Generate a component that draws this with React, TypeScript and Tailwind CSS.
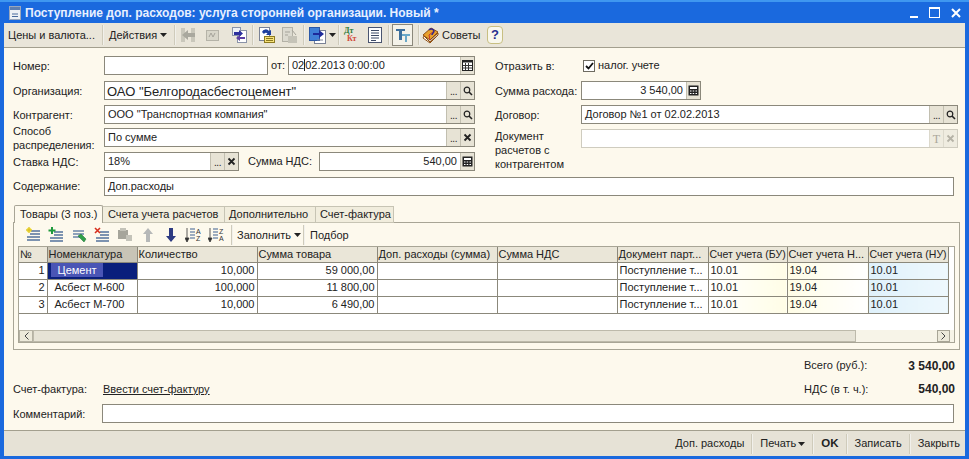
import type { ReactNode } from "react";

const font = "font-['Liberation_Sans',sans-serif]";

function Sep({ className = "" }: { className?: string }) {
  return <div className={`w-[2px] h-[20px] bg-[#cfcbbb] border-r border-white/70 shrink-0 ${className}`} />;
}

function Caret({ color = "#222" }: { color?: string }) {
  return (
    <svg width="7" height="4" viewBox="0 0 7 4" className="shrink-0">
      <path d="M0 0h7L3.5 4z" fill={color} />
    </svg>
  );
}

function Ico({ w = 16, h = 16, className = "", children }: { w?: number; h?: number; className?: string; children: ReactNode }) {
  return (
    <svg width={w} height={h} viewBox={`0 0 ${w} ${h}`} className={`shrink-0 ${className}`}>
      {children}
    </svg>
  );
}

const IconBackGrey = () => (
  <Ico>
    <rect x="1" y="1" width="4" height="14" fill="#c9c7bb" />
    <rect x="11" y="1" width="4" height="14" fill="#c9c7bb" />
    <path d="M2 8l6-5v3h7v4H8v3z" fill="#a9a89e" />
  </Ico>
);
const IconWaveGrey = () => (
  <Ico>
    <rect x="1.5" y="3.5" width="12" height="10" fill="#d8d6ca" stroke="#b5b3a8" />
    <path d="M4 10l2-4 2 4 2-4" fill="none" stroke="#a5a39a" />
  </Ico>
);
const IconDocArrows = () => (
  <Ico>
    <rect x="6.5" y="3.5" width="9" height="12" fill="#fff" stroke="#8a93a8" />
    <rect x="1.5" y="0.5" width="8" height="8" fill="#eef1f7" stroke="#8a93a8" />
    <path d="M3 5h5V3l4 3.5L8 10V8H3z" fill="#2c2f9e" />
    <path d="M14 10H9V8l-4 3 4 3v-2h5z" fill="#5b3fa5" />
  </Ico>
);
const IconDocYellow = () => (
  <Ico w={18} h={18}>
    <rect x="2.5" y="1.5" width="10" height="13" fill="#fff" stroke="#7a8296" />
    <path d="M5 6a4 4 0 0 1 7-1l2-1v5h-5l1.5-1.5A2 2 0 0 0 7 8z" fill="#1e3f9e" />
    <rect x="7.5" y="10.5" width="10" height="6" fill="#f7e27a" stroke="#8d7a20" />
    <path d="M9 12.5h7M9 14.5h7" stroke="#8d7a20" />
  </Ico>
);
const IconDocGrey = () => (
  <Ico w={17} h={17}>
    <rect x="1.5" y="0.5" width="10" height="14" fill="#dcdad0" stroke="#b3b1a6" />
    <rect x="7" y="9" width="9" height="7" fill="#c5c3b8" />
    <path d="M11 3l4 5M4 5h5M4 8h3" stroke="#a5a39a" fill="none" />
  </Ico>
);
const IconDocBlue = () => (
  <Ico w={17} h={17}>
    <rect x="5.5" y="3.5" width="11" height="13" fill="#fff" stroke="#7a8296" />
    <rect x="0.5" y="0.5" width="10" height="13" fill="#3f7fd6" stroke="#2b58a8" />
    <path d="M4 6h6V3l5 4-5 4V8H4z" fill="#1d2a9a" />
    <path d="M8 13h6" stroke="#7a8296" />
  </Ico>
);
const IconList = () => (
  <Ico>
    <rect x="1.5" y="0.5" width="13" height="15" fill="#fff" stroke="#4a5570" />
    <path d="M4 3.500h8M4 6h8M4 8.500h8M4 11h8M4 13.500h5" stroke="#3d4a66" />
  </Ico>
);
const IconFilter = () => (
  <Ico>
    <path d="M1 2h9v2H7v9H4V4H1z" fill="#3d6f9c" />
    <path d="M7 7h8v2h-3v6H10V9H7z" fill="#6aa8c8" />
  </Ico>
);
const IconBook = () => (
  <Ico w={18} h={18}>
    <path d="M1 9l8-7 7 4-8 8z" fill="#e9a12c" stroke="#8f4e10" />
    <path d="M2 10l6 6 8-9v2l-8 8-7-5z" fill="#fff" stroke="#8f4e10" />
    <path d="M8 14l-1-5 5-4" fill="none" stroke="#c4352a" />
    <path d="M7 4a3 3 0 0 1 5 1c0 2-2 2-2 4" fill="none" stroke="#33298c" strokeWidth="1.5" />
  </Ico>
);
const IconNewRow = () => (
  <Ico>
    <path d="M5 4h10M5 7h10M2 10h13M2 13h13" stroke="#7d93b0" strokeWidth="2" />
    <circle cx="4" cy="3" r="2.5" fill="#f5e54a" />
    <path d="M4 0v6M1 3h6" stroke="#d6b81f" />
  </Ico>
);
const IconAddRow = () => (
  <Ico>
    <path d="M6 5h9M6 8h9M2 11h13M2 14h13" stroke="#7d93b0" strokeWidth="2" />
    <path d="M4 0v7M0.5 3.500h7" stroke="#1f9a3c" strokeWidth="2" />
  </Ico>
);
const IconEditRow = () => (
  <Ico>
    <path d="M2 4h11M2 7h11M2 10h7" stroke="#8fa2bb" strokeWidth="2" />
    <path d="M7 9l3-2 5 5-2 3z" fill="#2fa04a" stroke="#1a6b30" strokeWidth="0.5" />
  </Ico>
);
const IconDelRow = () => (
  <Ico>
    <path d="M6 5h9M6 8h9M2 11h13M2 14h13" stroke="#7d93b0" strokeWidth="2" />
    <path d="M1 1l5 5M6 1L1 6" stroke="#d8301f" strokeWidth="1.6" />
  </Ico>
);
const IconOkGrey = () => (
  <Ico>
    <rect x="1" y="3" width="10" height="9" fill="#a6a59b" />
    <rect x="3" y="1" width="6" height="3" fill="#c4c3b9" />
    <rect x="9" y="8" width="6" height="6" fill="#c4c3b9" />
  </Ico>
);
const ArrowUp = () => (
  <Ico w={12}>
    <path d="M6 1l5 6H8v8H4V7H1z" fill="#b6b8b8" />
  </Ico>
);
const ArrowDown = () => (
  <Ico w={12}>
    <path d="M4 1h4v8h3l-5 6-5-6h3z" fill="#2d3a82" />
  </Ico>
);
const SortIcon = ({ top, bot }: { top: string; bot: string }) => (
  <Ico>
    <path d="M5 2h5M5 5h5M5 8h5M5 11h5" stroke="#7d93b0" strokeWidth="1.6" />
    <path d="M2 1v12M0 11l2 4 2-4z" stroke="#333" fill="#333" strokeWidth="0.8" />
    <text x="11" y="7" fontSize="7" fill="#333" fontFamily="Liberation Sans">{top}</text>
    <text x="11" y="14" fontSize="7" fill="#333" fontFamily="Liberation Sans">{bot}</text>
  </Ico>
);

function BtnIcon({ kind, dim }: { kind: string; dim?: boolean }) {
  const c = dim ? "#b5b2a6" : "#222";
  if (kind === "dots") return <span className="text-[10px] leading-[10px] pt-[2px] text-[#222] tracking-[-0.5px]">...</span>;
  if (kind === "search")
    return (
      <Ico w={10} h={10}>
        <circle cx="4" cy="4" r="2.8" fill="none" stroke={c} strokeWidth="1.2" />
        <path d="M6 6l3 3" stroke={c} strokeWidth="1.6" />
      </Ico>
    );
  if (kind === "x")
    return (
      <Ico w={9} h={9}>
        <path d="M1.5 1.5l6 6M7.5 1.5l-6 6" stroke={c} strokeWidth="1.8" />
      </Ico>
    );
  if (kind === "T") return <span className="font-['Liberation_Serif',serif] text-[12px] leading-none text-[#aaa79a]">T</span>;
  if (kind === "cal")
    return (
      <Ico w={11} h={11}>
        <rect x="0.5" y="0.5" width="10" height="10" fill="#fff" stroke="#222" />
        <rect x="0.5" y="0.5" width="10" height="2" fill="#222" />
        <path d="M3.5 3v7M6.5 3v7M1 5.5h9M1 8h9" stroke="#333" />
      </Ico>
    );
  return (
    <Ico w={11} h={11}>
      <rect x="0.5" y="0.5" width="10" height="10" fill="#222" />
      <rect x="2" y="2" width="7" height="2" fill="#fff" />
      <path d="M2 6h1.5M4.7 6h1.5M7.5 6H9M2 8.5h1.5M4.7 8.5h1.5M7.5 8.5H9" stroke="#fff" />
    </Ico>
  );
}

function Field({ value, buttons = [], right, className = "w-full", dim, size = "" }: { value?: ReactNode; buttons?: string[]; right?: boolean; className?: string; dim?: boolean; size?: string }) {
  return (
    <div className={`flex h-[19px] border ${dim ? "border-[#cfccbf]" : "border-[#8b887b]"} bg-white ${className}`}>
      <div className={`flex-1 min-w-0 px-[3px] flex items-center whitespace-nowrap ${right ? "justify-end" : ""} ${size}`}>{value}</div>
      {buttons.map((b, i) => (
        <div key={i} className={`w-[14px] flex items-center justify-center border-l ${dim ? "bg-[#efece0] border-[#dcd9cc]" : "bg-[#e7e3d5] border-[#c2bfb0]"}`}>
          <BtnIcon kind={b} dim={dim} />
        </div>
      ))}
    </div>
  );
}

function Label({ children, className = "" }: { children: ReactNode; className?: string }) {
  return <div className={`leading-[14px] text-[#222] shrink-0 ${className}`}>{children}</div>;
}

const cols = ["w-[28px]", "w-[90px]", "w-[120px]", "w-[120px]", "w-[120px]", "w-[120px]", "w-[91px]", "w-[79px]", "w-[81px]", "w-[80px]"];
const heads = ["№", "Номенклатура", "Количество", "Сумма товара", "Доп. расходы (сумма)", "Сумма НДС", "Документ парт...", "Счет учета (БУ)", "Счет учета Н...", "Счет учета (НУ)"];
const rows = [
  { n: "1", name: "Цемент", qty: "10,000", sum: "59 000,00" },
  { n: "2", name: "Асбест М-600", qty: "100,000", sum: "11 800,00" },
  { n: "3", name: "Асбест М-700", qty: "10,000", sum: "6 490,00" },
];
const td = "border border-[#8b887b] p-0 px-[2px] leading-[15px] overflow-hidden whitespace-nowrap";

function Grid() {
  return (
    <div className="mx-[4px] h-[97px] border border-[#a8a596] bg-white flex flex-col">
      <div className="flex-1 min-h-0 overflow-hidden">
        <table className="table-fixed border-collapse w-[929px]">
          <colgroup>
            {cols.map((c, i) => <col key={i} className={c} />)}
          </colgroup>
          <thead>
            <tr className="h-[15px]">
              {heads.map((h, i) => (
                <th key={h} className={`font-normal text-left text-[#222] p-0 px-[1px] leading-[14px] whitespace-nowrap overflow-hidden border-r border-b border-[#8b887b] ${i === 1 ? "bg-[#c8c4b6]" : "bg-[#eae6d8]"} ${i === 7 || i === 9 ? "text-[10.5px]" : ""}`}>{h}</th>
              ))}
            </tr>
          </thead>
          <tbody>
            {rows.map((r, i) => (
              <tr key={r.n} className="h-[17px]">
                <td className={`${td} text-right border-l-0`}>{r.n}</td>
                <td className={`${td} ${i === 0 ? "bg-[#0a1f7c]" : ""}`}>
                  {i === 0 ? <span className="inline-block w-[52px] pl-[7px] ml-[1px] bg-[#4a55b5] text-white leading-[14px]">{r.name}</span> : <span className="pl-[5px]">{r.name}</span>}
                </td>
                <td className={`${td} text-right`}>{r.qty}</td>
                <td className={`${td} text-right`}>{r.sum}</td>
                <td className={td} />
                <td className={td} />
                <td className={td}>Поступление т...</td>
                <td className={`${td} bg-linear-to-r from-white to-[#fffde6]`}>10.01</td>
                <td className={`${td} bg-linear-to-r from-[#fffde6] to-white`}>19.04</td>
                <td className={`${td} bg-linear-to-r from-[#dff1fb] to-[#eef8fd]`}>10.01</td>
              </tr>
            ))}
          </tbody>
        </table>
      </div>
      <div className="h-[12px] flex items-stretch bg-[#f7f4e8] pr-[4px]">
        <div className="w-[14px] bg-[#ece9da] border border-[#b5b2a4] flex items-center justify-center">
          <Ico w={5} h={8}><path d="M4.5 0.5L1 4l3.5 3.5" fill="none" stroke="#444" /></Ico>
        </div>
        <div className="w-[823px] bg-[#e6e3d6] border border-[#bdbaab]" />
        <div className="flex-1" />
        <div className="w-[13px] bg-[#ece9da] border border-[#a8a596] flex items-center justify-center">
          <Ico w={5} h={8}><path d="M0.5 0.5L4 4 0.5 7.5" fill="none" stroke="#444" /></Ico>
        </div>
      </div>
    </div>
  );
}

export default function App() {
  return (
    <div className={`w-[969px] h-[459px] overflow-hidden bg-[#1a69de] flex flex-col text-[11px] text-[#222] ${font}`}>
      {/* title */}
      <div className="h-[23px] shrink-0 flex items-center pl-[9px] pr-[8px] border-t-2 border-[#3f97f0] bg-[#1a69de]">
        <Ico w={12} h={14}>
          <rect x="0.5" y="0.5" width="11" height="13" fill="#eef0f4" stroke="#9aa7bd" />
          <rect x="1" y="1" width="10" height="3" fill="#5f7fb0" />
          <path d="M3 8h6M3 10.5h6" stroke="#4a6a9c" />
        </Ico>
        <div className="ml-[4px] text-[12px] font-bold text-[#e8f0ff] whitespace-nowrap">Поступление доп. расходов: услуга сторонней организации. Новый *</div>
        <div className="ml-auto flex items-center gap-[10px]">
          <div className="w-[8px] h-[2px] bg-white mt-[9px] mr-[1px]" />
          <div className="w-[11px] h-[11px] border border-white border-t-2" />
          <Ico w={10} h={10} className="ml-[1px]"><path d="M1 1l8 8M9 1l-8 8" stroke="#fff" strokeWidth="2" /></Ico>
        </div>
      </div>

      <div className="flex-1 min-h-0 mx-[4px] mb-[3px] flex flex-col bg-[#fdf9ed]">
        {/* toolbar */}
        <div className="h-[25px] shrink-0 bg-[#e9e5d9] border-b border-[#a39f8e] flex items-center pl-[4px] whitespace-nowrap">
          <span className="w-[94px]">Цены и валюта...</span>
          <Sep />
          <div className="flex items-center gap-[3px] w-[65px] ml-[5px]">Действия <Caret /></div>
          <Sep />
          <div className="ml-[4px]"><IconBackGrey /></div>
          <div className="ml-[9px]"><IconWaveGrey /></div>
          <div className="ml-[10px]"><IconDocArrows /></div>
          <Sep className="ml-[5px]" />
          <div className="ml-[3px]"><IconDocYellow /></div>
          <div className="ml-[6px]"><IconDocGrey /></div>
          <Sep className="ml-[5px]" />
          <div className="ml-[4px]"><IconDocBlue /></div>
          <div className="ml-[3px]"><Caret /></div>
          <Sep className="ml-[2px]" />
          <div className="ml-[4px] w-[14px] h-[16px] flex flex-col font-bold text-[8px] leading-[8px] font-['Liberation_Serif',serif]">
            <span className="text-[#2c7a38]">Дт</span>
            <span className="text-[#d24a3a] pl-[3px]">Кт</span>
          </div>
          <div className="ml-[9px]"><IconList /></div>
          <Sep className="ml-[5px]" />
          <div className="ml-[2px] w-[21px] h-[22px] border border-[#8b887b] bg-[#f4f2e9] flex items-center justify-center"><IconFilter /></div>
          <Sep className="ml-[5px]" />
          <div className="ml-[2px]"><IconBook /></div>
          <span className="ml-[2px] w-[38px]">Советы</span>
          <div className="ml-[7px] w-[16px] h-[18px] rounded-[4px] border border-[#c8bf82] bg-[#f8f7ec] flex items-center justify-center font-bold text-[13px] text-[#28308f]">?</div>
        </div>

        {/* form */}
        <div className="px-[9px] pt-[8px] flex-1 min-h-0 flex flex-col">
          <div className="grid grid-cols-[462px_463px] gap-x-[20px]">
            <div className="flex flex-col">
              <div className="flex items-center h-[19px]">
                <Label className="w-[91px]">Номер:</Label>
                <Field className="w-[164px]" />
                <span className="w-[20px] text-center">от:</span>
                <Field className="flex-1" buttons={["cal"]} value={<span>02<span className="border-l border-[#222]">02.2013 0:00:00</span></span>} />
              </div>
              <div className="flex items-center h-[19px] mt-[6px]">
                <Label className="w-[91px]">Организация:</Label>
                <Field className="flex-1" size="text-[13px] pt-[3px] -ml-px" buttons={["dots", "search"]} value={'ОАО "Белгородасбестоцемент"'} />
              </div>
              <div className="flex items-center h-[19px] mt-[5px]">
                <Label className="w-[91px]">Контрагент:</Label>
                <Field className="flex-1" buttons={["dots", "search"]} value={'ООО "Транспортная компания"'} />
              </div>
              <div className="flex items-center h-[19px] mt-[4px]">
                <Label className="w-[91px] mt-[1px]">Способ<br />распределения:</Label>
                <Field className="flex-1" buttons={["dots", "x"]} value="По сумме" />
              </div>
              <div className="flex items-center h-[19px] mt-[5px]">
                <Label className="w-[91px]">Ставка НДС:</Label>
                <Field className="w-[135px]" buttons={["dots", "x"]} value="18%" />
                <span className="ml-[9px] w-[71px]">Сумма НДС:</span>
                <Field className="flex-1" right buttons={["calc"]} value="540,00" />
              </div>
            </div>
            <div className="flex flex-col">
              <div className="flex items-center h-[19px]">
                <Label className="w-[88px]">Отразить в:</Label>
                <div className="w-[12px] h-[12px] border border-[#6e6b60] bg-white flex items-center justify-center">
                  <Ico w={9} h={8}><path d="M1 4l2.5 2.5L8 1" fill="none" stroke="#111" strokeWidth="1.8" /></Ico>
                </div>
                <span className="ml-[3px]">налог. учете</span>
              </div>
              <div className="flex items-center h-[19px] mt-[6px]">
                <Label className="w-[86px]">Сумма расхода:</Label>
                <Field className="w-[120px]" right buttons={["calc"]} value="3 540,00" />
              </div>
              <div className="flex items-center h-[19px] mt-[5px]">
                <Label className="w-[86px]">Договор:</Label>
                <Field className="flex-1" buttons={["dots", "search"]} value="Договор №1 от 02.02.2013" />
              </div>
              <div className="flex items-start h-[19px] mt-[5px]">
                <Label className="w-[86px]">Документ<br />расчетов с<br />контрагентом</Label>
                <Field className="flex-1" dim buttons={["T", "x"]} />
              </div>
            </div>
          </div>
          <div className="flex items-center h-[18px] mt-[6px]">
            <Label className="w-[91px]">Содержание:</Label>
            <Field className="flex-1" value="Доп.расходы" />
            <div className="w-[2px]" />
          </div>

          {/* tabs */}
          <div className="mt-[10px] flex items-end h-[18px] ml-[1px] relative z-10 whitespace-nowrap">
            <div className="w-[89px] h-[18px] pl-[5px] flex items-center rounded-t-[2px] border border-b-0 border-[#a8a596] bg-[#fdf9ed]">Товары (3 поз.)</div>
            <div className="w-[122px] h-[17px] pl-[5px] flex items-center border-t border-r border-b border-[#c7c4b4] bg-[#f1eddd]">Счета учета расчетов</div>
            <div className="w-[91px] h-[17px] pl-[4px] flex items-center border-t border-r border-b border-[#c7c4b4] bg-[#f1eddd]">Дополнительно</div>
            <div className="w-[78px] h-[17px] pl-[4px] flex items-center border-t border-r border-b border-[#c7c4b4] bg-[#f1eddd]">Счет-фактура</div>
          </div>
          <div className="-mt-px w-[947px] h-[128px] border border-[#a8a596] pt-[1px] shrink-0">
            <div className="h-[22px] flex items-center pl-[11px] whitespace-nowrap">
              <div className="flex items-center gap-[7px]">
                <IconNewRow />
                <IconAddRow />
                <IconEditRow />
                <IconDelRow />
                <IconOkGrey />
                <span className="w-[12px] ml-[2px]"><ArrowUp /></span>
                <span className="w-[12px] ml-[4px]"><ArrowDown /></span>
                <span className="ml-[1px]"><SortIcon top="A" bot="Z" /></span>
                <SortIcon top="Z" bot="A" />
                <Sep />
              </div>
              <div className="flex items-center gap-[3px] ml-[4px] w-[64px]">Заполнить <Caret /></div>
              <Sep className="ml-[2px]" />
              <span className="ml-[5px]">Подбор</span>
            </div>
            <Grid />
          </div>

          {/* totals */}
          <div className="mt-[6px] flex justify-end h-[21px] items-start pt-[1px] pr-[1px]">
            <span className="w-[99px]">Всего (руб.):</span>
            <span className="w-[52px] text-right font-bold text-[12px]">3 540,00</span>
          </div>
          <div className="flex items-center h-[24px] pr-[1px]">
            <Label className="w-[90px]">Счет-фактура:</Label>
            <span className="underline">Ввести счет-фактуру</span>
            <span className="ml-auto w-[99px]">НДС (в т. ч.):</span>
            <span className="w-[52px] text-right font-bold text-[12px]">540,00</span>
          </div>
          <div className="flex items-center h-[19px] mt-[3px]">
            <Label className="w-[89px]">Комментарий:</Label>
            <Field className="flex-1" />
            <div className="w-[2px]" />
          </div>
        </div>

        {/* footer */}
        <div className="h-[26px] shrink-0 border-t border-[#a39f8e] bg-[#e6e2d6] flex items-center justify-end pr-[5px] gap-[7px] whitespace-nowrap text-[11px]">
          <span>Доп. расходы</span>
          <Sep />
          <div className="flex items-center gap-[2px]">Печать <Caret /></div>
          <Sep />
          <span className="font-bold text-[11.5px]">OK</span>
          <Sep />
          <span>Записать</span>
          <Sep />
          <span>Закрыть</span>
        </div>
      </div>
    </div>
  );
}
